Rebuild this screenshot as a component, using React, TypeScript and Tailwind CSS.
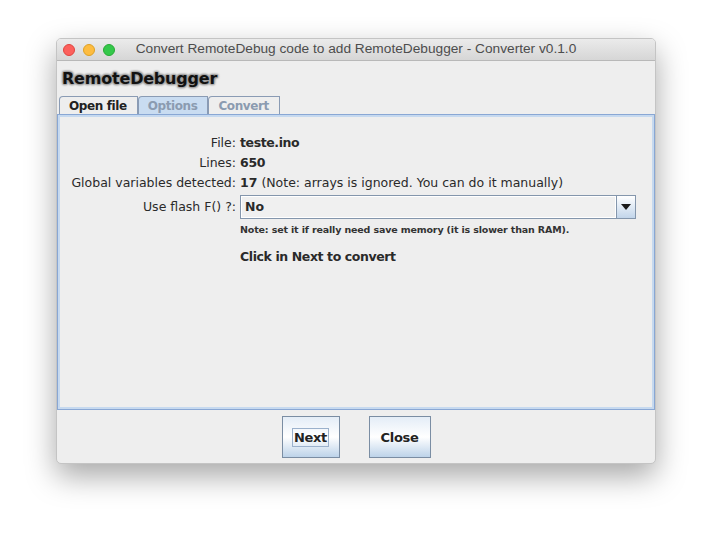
import React from "react";

const font = { fontFamily: '"DejaVu Sans", "Open Sans", sans-serif' };

const Tab = ({ label, active, selected }: { label: string; active?: boolean; selected?: boolean }) => (
  <div
    className={
      "h-[18px] pl-[9px] pr-[10px] flex items-center border border-b-0 border-[#8a9bb4] rounded-tl-[4px] text-[12px] font-bold tracking-[-0.4px] " +
      (selected ? "bg-[#c9dcf1] " : "bg-[#eeeeee] ") +
      (active ? "text-[#222222]" : "text-[#8b9bb0]")
    }
  >
    {label}
  </div>
);

const Btn = ({ label, focus, w }: { label: string; focus?: boolean; w: string }) => (
  <div
    className={
      "h-[42px] flex items-center justify-center border border-[#7a8da3] bg-gradient-to-b from-[#e4edf7] via-white to-[#bdd3e9] text-[13px] font-bold tracking-[-0.3px] text-[#222222] " +
      w
    }
  >
    <span className={focus ? "border border-[#9bb1cc] px-[1px] leading-[17px]" : "leading-[17px]"}>{label}</span>
  </div>
);

export default function App() {
  return (
    <div className="w-[712px] h-[537px] bg-white pt-[38px] pl-[56px]" style={font}>
      <div className="w-[600px] h-[426px] flex flex-col rounded-[5px] bg-[#eeeeee] shadow-[0_12px_30px_rgba(0,0,0,0.35)] border border-[#c4c4c4] overflow-hidden">
        {/* title bar */}
        <div className="h-[22px] shrink-0 flex items-center relative bg-gradient-to-b from-[#ebebeb] to-[#d6d6d6] border-b border-[#b8b8b8]">
          <div className="flex gap-[8px] pl-[6px]">
            <span className="w-[12px] h-[12px] rounded-full bg-[#fc605c] border border-[#e0443e]" />
            <span className="w-[12px] h-[12px] rounded-full bg-[#fdbc40] border border-[#dea123]" />
            <span className="w-[12px] h-[12px] rounded-full bg-[#34c84a] border border-[#27aa35]" />
          </div>
          <div
            className="absolute inset-0 flex items-center justify-center text-[13.7px] text-[#4d4d4d]"
            style={{ fontFamily: '"Liberation Sans", Arial, sans-serif' }}
          >
            Convert RemoteDebug code to add RemoteDebugger - Converter v0.1.0
          </div>
        </div>

        {/* header */}
        <div className="h-[35px] shrink-0 flex items-center pl-[5px]">
          <span className="text-[16px] font-bold tracking-[-0.2px] text-[#111111] [text-shadow:1px_1px_2px_#9a9a9a,-1px_-1px_2px_#9a9a9a,1px_-1px_2px_#9a9a9a,-1px_1px_2px_#9a9a9a]">
            RemoteDebugger
          </span>
        </div>

        {/* tabs */}
        <div className="flex pl-[2px] shrink-0">
          <Tab label="Open file" active />
          <Tab label="Options" selected />
          <Tab label="Convert" />
        </div>

        {/* panel */}
        <div className="h-[296px] shrink-0 border border-[#89a7d4] shadow-[inset_0_0_0_2px_#c6d9ef]">
          <div className="pt-[18px] grid grid-cols-[178px_1fr] gap-x-[4px] text-[12.5px] text-[#2a2a2a] pr-[18px]">
            <div className="h-[20px] flex items-center justify-end">File:</div>
            <div className="h-[20px] flex items-center font-bold tracking-[-0.4px]">teste.ino</div>
            <div className="h-[20px] flex items-center justify-end">Lines:</div>
            <div className="h-[20px] flex items-center font-bold tracking-[-0.3px]">650</div>
            <div className="h-[20px] flex items-center justify-end whitespace-nowrap">Global variables detected:</div>
            <div className="h-[20px] flex items-center whitespace-nowrap">
              <span className="font-bold">17</span>&nbsp;(Note: arrays is ignored. You can do it manually)
            </div>
            <div className="h-[28px] flex items-center justify-end">Use flash F() ?:</div>
            <div className="h-[28px] flex items-center">
              <div className="flex-1 h-[24px] flex border border-[#8496ac] bg-[#f0f0f0]">
                <div className="flex-1 flex items-center pl-[3px] font-bold border border-white">No</div>
                <div className="w-[19px] flex items-center justify-center border-l border-[#8496ac] bg-gradient-to-b from-white to-[#c2d5ea]">
                  <svg width="10" height="6" viewBox="0 0 10 6">
                    <path d="M0 0 L10 0 L5 6 Z" fill="#1a1a1a" />
                  </svg>
                </div>
              </div>
            </div>
            <div />
            <div className="h-[18px] flex items-center text-[9.5px] font-bold tracking-[-0.15px] text-[#333333] whitespace-nowrap">
              Note: set it if really need save memory (it is slower than RAM).
            </div>
            <div />
            <div className="h-[18px] mt-[9px] flex items-center font-bold tracking-[-0.4px]">Click in Next to convert</div>
          </div>
        </div>

        {/* buttons */}
        <div className="flex-1 flex justify-center items-start pt-[6px] gap-[29px]">
          <Btn label="Next" focus w="w-[58px]" />
          <Btn label="Close" w="w-[62px]" />
        </div>
      </div>
    </div>
  );
}
